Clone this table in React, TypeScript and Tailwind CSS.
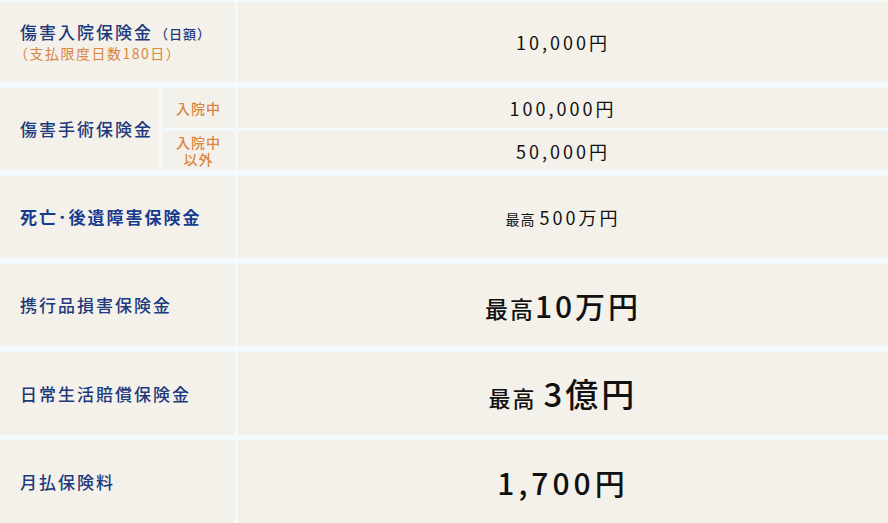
import React from 'react';

const cell = 'bg-[#f4f1eb] flex items-center';
const label = 'text-[#1d3a7c] text-[17px] font-medium tracking-[2px] leading-tight';
const value = 'text-[#111] text-[18px] tracking-[3px] leading-none';
const sub = 'text-[#d9853f] text-[14px] font-medium tracking-[1px]';

const Row = ({ title, children, h = 'h-[82px]' }: { title: React.ReactNode; children: React.ReactNode; h?: string }) => (
  <div className={`grid grid-cols-[235px_1fr] gap-[3px] ${h}`}>
    <div className={`${cell} pl-5`}>{title}</div>
    <div className={`${cell} justify-center`}>{children}</div>
  </div>
);

export default function App() {
  return (
    <div
      className="w-[888px] h-[523px] bg-[#f1fbfd] pt-[2px] flex flex-col gap-[6px] overflow-hidden"
      style={{ fontFamily: '"Noto Sans CJK JP", "Noto Sans", sans-serif' }}
    >
      {/* 傷害入院 */}
      <Row
        h="h-[80px]"
        title={
          <div>
            <p className={label}>
              傷害入院保険金<span className="text-[13px] tracking-[1px] ml-[2px]">（日額）</span>
            </p>
            <p className="text-[#d9853f] text-[14px] tracking-[1.5px] leading-tight mt-[3px] -ml-[6px]">（支払限度日数180日）</p>
          </div>
        }
      >
        <span className={value}>10,000円</span>
      </Row>

      {/* 傷害手術 */}
      <div className="grid grid-cols-[159px_73px_1fr] grid-rows-[40px_39px] gap-[3px] h-[82px]">
        <div className={`${cell} pl-5 row-span-2`}>
          <p className={label}>傷害手術保険金</p>
        </div>
        <div className={`${cell} justify-center ${sub}`}>入院中</div>
        <div className={`${cell} justify-center`}>
          <span className={value}>100,000円</span>
        </div>
        <div className={`${cell} flex-col justify-center ${sub} leading-[17px]`}>
          <span>入院中</span>
          <span>以外</span>
        </div>
        <div className={`${cell} justify-center`}>
          <span className={value}>50,000円</span>
        </div>
      </div>

      <Row title={<p className="text-[#183b8e] text-[17px] font-bold tracking-[2px]">死亡･後遺障害保険金</p>}>
        <span className={value}>
          <span className="text-[14px] tracking-[1px]">最高 </span>500万円
        </span>
      </Row>

      <Row title={<p className={label}>携行品損害保険金</p>}>
        <span className="text-[#111] leading-none font-medium">
          <span className="text-[23px] tracking-[2px]">最高</span>
          <span className="text-[30px] tracking-[3px]">10万円</span>
        </span>
      </Row>

      <Row h="h-[83px]" title={<p className={label}>日常生活賠償保険金</p>}>
        <span className="text-[#111] leading-none font-medium">
          <span className="text-[22px] tracking-[2px]">最高 </span>
          <span className="text-[33px] tracking-[3px]">3億円</span>
        </span>
      </Row>

      <Row h="h-[83px] -mt-[1px]" title={<p className={label}>月払保険料</p>}>
        <span className="text-[#111] text-[30px] tracking-[4px] leading-none font-medium">1,700円</span>
      </Row>
    </div>
  );
}
